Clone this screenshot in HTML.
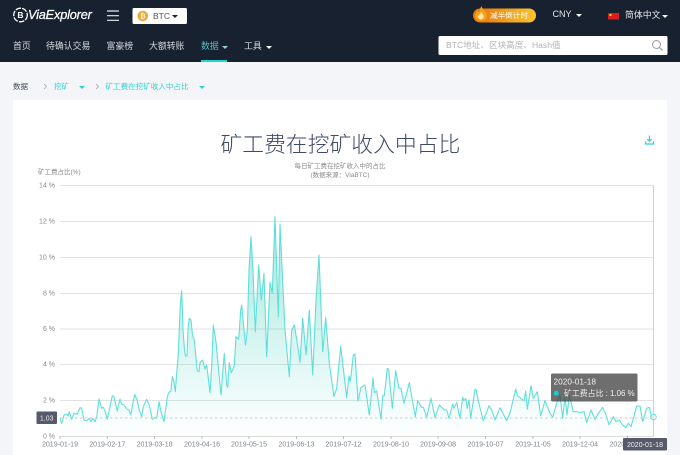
<!DOCTYPE html>
<html lang="zh">
<head>
<meta charset="utf-8">
<style>
html,body{margin:0;padding:0;width:680px;height:455px;overflow:hidden;background:#f4f5f9;}
body{position:relative;font-family:"Liberation Sans","Noto Sans CJK SC",sans-serif;}
#w{position:absolute;left:0;top:0;width:680px;height:455px;overflow:hidden;filter:blur(.3px);}
.a{position:absolute;white-space:nowrap;line-height:1;}
.hdr{position:absolute;left:0;top:0;width:680px;height:62px;background:#17212f;}
.nav{color:#d8dce0;font-size:8.9px;top:42px;}
.caret{position:absolute;width:0;height:0;border-left:3px solid transparent;border-right:3px solid transparent;border-top:3px solid #fff;}
.card{position:absolute;left:13px;top:100px;width:654px;height:355px;background:#fff;}
svg{position:absolute;left:0;top:0;}
svg text{font-family:"Liberation Sans","Noto Sans CJK SC",sans-serif;}
</style>
</head>
<body>
<div id="w">
<div class="hdr"></div>

<svg width="680" height="62" viewBox="0 0 680 62">
  <circle cx="20.5" cy="15" r="6.8" fill="none" stroke="#fff" stroke-width="1.3" stroke-dasharray="5.5 1.2"/>
  <text x="20.5" y="18.2" font-size="8.5" font-weight="700" fill="#fff" text-anchor="middle">B</text>
  <path d="M107 11h12M107 15.700h12M107 20.300h12" stroke="#e8eaec" stroke-width="1.200" fill="none"/>
  <rect x="132.500" y="8" width="54.500" height="16" rx="1.500" fill="#fff"/>
  <circle cx="142.800" cy="16" r="5.300" fill="#f4a531"/>
  <text x="142.800" y="18.500" font-size="7" font-weight="700" fill="#fff" text-anchor="middle">₿</text>
  <defs>
    <linearGradient id="pill" x1="0" x2="1" y1="0" y2="0">
      <stop offset="0" stop-color="#e8720c"/><stop offset="1" stop-color="#f7c52c"/>
    </linearGradient>
  </defs>
  <rect x="473" y="8.500" width="63" height="14" rx="7" fill="url(#pill)"/>
  <path d="M481.500 6c.3 3 5.500 5.500 5.500 10 0 3-2.700 5-6 5s-6-2-6-5c0-2.500 1.500-4 2.700-5.500.3 1.200.8 1.800 1.500 2.200.3-2.500 1-4.700 2.300-6.700z" fill="#f7a01a"/>
  <path d="M481.300 12c.3 1.500 2.400 2.300 2.400 4.500 0 1.600-1.200 2.800-2.800 2.800s-2.700-1.200-2.700-2.600c0-1.800 2-2.700 3.100-4.700z" fill="#ffe9a8"/>
  <rect x="608" y="13" width="11" height="6.500" fill="#d81e1e"/>
  <rect x="609.500" y="14" width="2" height="2" fill="#f5d020"/>
  <rect x="438.500" y="36" width="229" height="19" rx="1.500" fill="#fff"/>
  <circle cx="656.500" cy="44.500" r="4" fill="none" stroke="#9a9a9a" stroke-width="1"/>
  <path d="M659.500 47.500l3 3" stroke="#9a9a9a" stroke-width="1.100"/>
  <rect x="201" y="60" width="26" height="2" fill="#1dd6d0"/>
</svg>

<div class="a" style="left:28px;top:8.700px;font-size:12.800px;font-style:italic;color:#fff;letter-spacing:-.2px;-webkit-text-stroke:.25px #fff;">ViaExplorer</div>
<div class="a" style="left:153px;top:11.500px;font-size:8.500px;color:#555;">BTC</div>
<div class="caret" style="left:172px;top:14.500px;border-top-color:#222;"></div>

<div class="a" style="left:490px;top:11.500px;font-size:7.600px;color:#fff;">减半倒计时</div>
<div class="a" style="left:552.500px;top:10.300px;font-size:9px;color:#e6e8ea;">CNY</div>
<div class="caret" style="left:575.500px;top:14px;"></div>
<div class="a" style="left:625px;top:11px;font-size:8.900px;color:#e6e8ea;">简体中文</div>
<div class="caret" style="left:662px;top:14.500px;"></div>

<div class="a nav" style="left:13px;">首页</div>
<div class="a nav" style="left:46px;">待确认交易</div>
<div class="a nav" style="left:106.500px;">富豪榜</div>
<div class="a nav" style="left:149px;">大额转账</div>
<div class="a nav" style="left:201px;color:#5fb8c2;">数据</div>
<div class="caret" style="left:222px;top:45.500px;border-top-color:#8fd0d6;"></div>
<div class="a nav" style="left:244px;">工具</div>
<div class="caret" style="left:266px;top:45.500px;"></div>
<div class="a" style="left:446px;top:41.300px;font-size:8.600px;color:#b3b3b3;">BTC地址、区块高度、Hash值</div>

<div class="a" style="left:13px;top:82.500px;font-size:7.500px;color:#454b58;">数据</div>
<div class="a" style="left:54px;top:82.500px;font-size:7.500px;color:#32d0cc;">挖矿</div>
<div class="caret" style="left:78.500px;top:85.500px;border-top-color:#32d0cc;"></div>
<div class="a" style="left:105.500px;top:82.500px;font-size:7.550px;color:#32d0cc;">矿工费在挖矿收入中占比</div>
<div class="caret" style="left:198.500px;top:85.500px;border-top-color:#32d0cc;"></div>
<svg width="680" height="100" viewBox="0 0 680 100">
  <path d="M44 84l2.500 2.500L44 89M96 84l2.500 2.500L96 89" fill="none" stroke="#aaa" stroke-width=".8"/>
</svg>

<div class="card"></div>

<div class="a" style="left:220.500px;top:134px;font-size:21.800px;font-weight:300;color:#3f4a68;">矿工费在挖矿收入中占比</div>
<div class="a" style="left:240px;width:200px;text-align:center;top:163.500px;font-size:6.500px;color:#8a8a8a;">每日矿工费在挖矿收入中的占比</div>
<div class="a" style="left:240px;width:200px;text-align:center;top:172.500px;font-size:6.500px;color:#8a8a8a;">(数据来源：ViaBTC)</div>
<div class="a" style="left:38px;top:170px;font-size:6.500px;color:#8a8a8a;">矿工费占比(%)</div>

<svg width="680" height="455" viewBox="0 0 680 455">
  <defs>
    <linearGradient id="fill" gradientUnits="userSpaceOnUse" x1="0" x2="0" y1="216" y2="436">
      <stop offset="0" stop-color="#2cc8b4" stop-opacity=".42"/>
      <stop offset=".5" stop-color="#2cc8b4" stop-opacity=".22"/>
      <stop offset="1" stop-color="#2cd0c0" stop-opacity="0"/>
    </linearGradient>
  </defs>
  <g stroke="#e2e2e4" stroke-width="1">
    <path d="M60 185.500H654M60 221.500H654M60 257.500H654M60 293.500H654M60 329H654M60 364.500H654M60 400.500H654"/>
  </g>
  <path d="M60 436.500H654" stroke="#dcdcdc"/>
  <path d="M60 436v3M107.300 436v3M154.600 436v3M202 436v3M249 436v3M296.500 436v3M343.500 436v3M391 436v3M438 436v3M485.500 436v3M533 436v3M580 436v3M627.500 436v3" stroke="#bbb"/>
  <path d="M653.500 185V436" stroke="#cfcfcf" stroke-width="1"/>

  <polygon fill="url(#fill)" points="60,436 60,418.300 61.700,423.300 64,415 66.700,414 68.300,416 69.300,411.700 71.700,419.300 74,413.300 77.300,414.300 80,407.700 81.700,408.300 84,420 86.700,420.700 89.300,418.300 91,421.700 92.700,418.300 95,421.700 96.700,416.700 99,399 101.700,408.300 103.300,407.300 105.300,411.700 107.300,419.300 109.300,410 112.300,395.700 114,396.700 117.300,411 120,399 121.700,404 124,405 126.700,409 129,410 130.700,415 134.700,394.300 137.300,400.700 139.300,410 141.700,416.700 143.300,406.700 146.700,399.300 149.300,405 152.300,419.300 155,417.700 156.700,418.300 159,401.700 161,411.700 164,421.700 167.300,396.700 169,392.300 171,391 172.300,376.700 173.700,380 175.300,391.700 178.300,353 180.300,305 181.700,290.700 183,330 184.500,350 185.500,356 187,356 188,330 189.300,318.300 191,320 192.500,335 194.300,340 197.300,370.700 199,371.700 200,362.300 202.700,360 205,369 206.700,365 210,392.700 211.700,366.700 213.300,325 216,341.700 218.300,366.700 221,395 224.300,353.300 226.700,385 227.700,387.300 229.300,362.700 231.300,372.700 234.300,366 236,336.700 238.700,339.300 240.700,310 241.700,305 243.500,325 245.500,345 247.300,330 249,270 251,236.700 253,270 255.300,332 258.700,265 261.300,300 264,273.300 266.700,356.700 270,282.300 272.300,293.300 275,216.700 278.300,316.700 280,224 285,330 289.300,376.700 291.700,330 294.300,325 297.300,343.300 300,362.300 302.700,318 306,355 309.300,310 312.700,375 316,300 319,255 322.700,351.700 325.700,317.700 329.300,363.300 334,396.700 336.700,388 340.700,346 346.700,397.700 349,376 350.300,381.700 353.300,355 355,354 358,401 361,387.300 365,385 369.300,415 373,377.700 374.300,392.700 376.700,391 381,419.300 382.700,395.700 384.300,395.700 387.300,368.300 388.700,369.300 392.300,408.300 395.700,370.700 399,388.300 401,388.300 404,403.300 409.300,382.700 415.300,416.700 417.700,400.700 421.700,407.300 423.300,407.300 426.700,417.300 431,398.300 435,417.700 439.300,405 444.300,410 446.700,410 449,418.300 452.700,404 454,408.300 456.700,402.300 460,418.300 462.700,397.300 463.700,400.700 465.700,398.300 467.300,408.300 469,400 470.700,418.300 475,389.300 476.300,390 478.300,400.700 483.300,420.700 489,405.700 491.700,410 495,420 500,407.700 506.700,420.700 510,413 515.700,389 517.300,395.700 524,400.700 525.700,391 527.300,409.300 531,385.700 533.300,398.300 537.300,391.700 540.700,416 545,400.700 550,413.300 552.700,417.300 556.700,403.300 560,395 562.700,418.300 565,396.700 567,415 569.300,395 573.300,411.700 576.700,411.700 580,412.500 584,411.700 586.700,422.700 591,410 595,419.300 598.300,413.300 602.700,407.300 606.700,416.700 609,425 613.300,416.700 616,421.700 619.300,420 622.700,425 625.700,427.700 628.300,423.300 631,426.700 634,416 636.700,406 640,406 642.700,421.700 646.700,408.300 649.300,407.300 651.700,417.300 654,417 654,436"/>
  <polyline fill="none" stroke="#5fdfda" stroke-width="1.100" stroke-linejoin="round" points="60,418.300 61.700,423.300 64,415 66.700,414 68.300,416 69.300,411.700 71.700,419.300 74,413.300 77.300,414.300 80,407.700 81.700,408.300 84,420 86.700,420.700 89.300,418.300 91,421.700 92.700,418.300 95,421.700 96.700,416.700 99,399 101.700,408.300 103.300,407.300 105.300,411.700 107.300,419.300 109.300,410 112.300,395.700 114,396.700 117.300,411 120,399 121.700,404 124,405 126.700,409 129,410 130.700,415 134.700,394.300 137.300,400.700 139.300,410 141.700,416.700 143.300,406.700 146.700,399.300 149.300,405 152.300,419.300 155,417.700 156.700,418.300 159,401.700 161,411.700 164,421.700 167.300,396.700 169,392.300 171,391 172.300,376.700 173.700,380 175.300,391.700 178.300,353 180.300,305 181.700,290.700 183,330 184.500,350 185.500,356 187,356 188,330 189.300,318.300 191,320 192.500,335 194.300,340 197.300,370.700 199,371.700 200,362.300 202.700,360 205,369 206.700,365 210,392.700 211.700,366.700 213.300,325 216,341.700 218.300,366.700 221,395 224.300,353.300 226.700,385 227.700,387.300 229.300,362.700 231.300,372.700 234.300,366 236,336.700 238.700,339.300 240.700,310 241.700,305 243.500,325 245.500,345 247.300,330 249,270 251,236.700 253,270 255.300,332 258.700,265 261.300,300 264,273.300 266.700,356.700 270,282.300 272.300,293.300 275,216.700 278.300,316.700 280,224 285,330 289.300,376.700 291.700,330 294.300,325 297.300,343.300 300,362.300 302.700,318 306,355 309.300,310 312.700,375 316,300 319,255 322.700,351.700 325.700,317.700 329.300,363.300 334,396.700 336.700,388 340.700,346 346.700,397.700 349,376 350.300,381.700 353.300,355 355,354 358,401 361,387.300 365,385 369.300,415 373,377.700 374.300,392.700 376.700,391 381,419.300 382.700,395.700 384.300,395.700 387.300,368.300 388.700,369.300 392.300,408.300 395.700,370.700 399,388.300 401,388.300 404,403.300 409.300,382.700 415.300,416.700 417.700,400.700 421.700,407.300 423.300,407.300 426.700,417.300 431,398.300 435,417.700 439.300,405 444.300,410 446.700,410 449,418.300 452.700,404 454,408.300 456.700,402.300 460,418.300 462.700,397.300 463.700,400.700 465.700,398.300 467.300,408.300 469,400 470.700,418.300 475,389.300 476.300,390 478.300,400.700 483.300,420.700 489,405.700 491.700,410 495,420 500,407.700 506.700,420.700 510,413 515.700,389 517.300,395.700 524,400.700 525.700,391 527.300,409.300 531,385.700 533.300,398.300 537.300,391.700 540.700,416 545,400.700 550,413.300 552.700,417.300 556.700,403.300 560,395 562.700,418.300 565,396.700 567,415 569.300,395 573.300,411.700 576.700,411.700 580,412.500 584,411.700 586.700,422.700 591,410 595,419.300 598.300,413.300 602.700,407.300 606.700,416.700 609,425 613.300,416.700 616,421.700 619.300,420 622.700,425 625.700,427.700 628.300,423.300 631,426.700 634,416 636.700,406 640,406 642.700,421.700 646.700,408.300 649.300,407.300 651.700,417.300 654,417"/>
  <path d="M60 418H654" stroke="#bdbdbd" stroke-width=".8" stroke-dasharray="2.500 2.500"/>
  <circle cx="653.500" cy="417" r="2.700" fill="#fff" fill-opacity=".5" stroke="#63dfda" stroke-width="1"/>

  <g font-size="7" fill="#8b8b8b" text-anchor="end">
    <text x="55" y="187.500">14 %</text>
    <text x="55" y="223.500">12 %</text>
    <text x="55" y="259.500">10 %</text>
    <text x="55" y="295.500">8 %</text>
    <text x="55" y="331">6 %</text>
    <text x="55" y="366.500">4 %</text>
    <text x="55" y="402.500">2 %</text>
    <text x="55" y="438.500">0 %</text>
  </g>
  <g font-size="7.050" fill="#7f8590" text-anchor="middle">
    <text x="60" y="446.500">2019-01-19</text>
    <text x="107.300" y="446.500">2019-02-17</text>
    <text x="154.600" y="446.500">2019-03-18</text>
    <text x="202" y="446.500">2019-04-16</text>
    <text x="249" y="446.500">2019-05-15</text>
    <text x="296.500" y="446.500">2019-06-13</text>
    <text x="343.500" y="446.500">2019-07-12</text>
    <text x="391" y="446.500">2019-08-10</text>
    <text x="438" y="446.500">2019-09-08</text>
    <text x="485.500" y="446.500">2019-10-07</text>
    <text x="533" y="446.500">2019-11-05</text>
    <text x="580" y="446.500">2019-12-04</text>
    <text x="627.500" y="446.500">2020-01-01</text>
  </g>

  <rect x="36.500" y="411.500" width="20.500" height="12.500" rx="1" fill="#565a6b"/>
  <text x="46.700" y="420.500" font-size="7" fill="#eee" text-anchor="middle">1.03</text>
  <rect x="623" y="438" width="44" height="12.500" rx="1" fill="#565a6b"/>
  <text x="645" y="447" font-size="7.050" fill="#f0f0f0" text-anchor="middle">2020-01-18</text>

  <rect x="551" y="373.500" width="86.500" height="28" rx="1.500" fill="#4a4a4a" fill-opacity=".8"/>
  <text x="553.500" y="384.500" font-size="8.300" fill="#f0f0f0">2020-01-18</text>
  <circle cx="556.300" cy="393.200" r="2.500" fill="#14cfc9"/>
  <text x="564" y="396" font-size="7.900" fill="#f0f0f0">矿工费占比 : 1.06 %</text>

  <path d="M649.500 135.500v5.500M647.300 139l2.200 2.300 2.200-2.300" fill="none" stroke="#2fd0cd" stroke-width="1.200"/>
  <path d="M645.500 141.500v2.500h8v-2.500" fill="none" stroke="#2fd0cd" stroke-width="1.200"/>
</svg>
</div>
</body>
</html>
